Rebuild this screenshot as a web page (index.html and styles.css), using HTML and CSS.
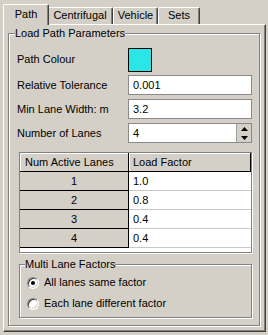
FILE: index.html
```html
<!DOCTYPE html>
<html lang="en">
<head>
    <meta charset="UTF-8">
    <meta name="viewport" content="width=device-width, initial-scale=1.0">
    <title>Path Settings</title>
    <link rel="stylesheet" href="styles.css">
</head>
<body>
    <div class="tabs">
        <div class="tab tab-path active">Path</div>
        <div class="tab tab-centrifugal">Centrifugal</div>
        <div class="tab tab-vehicle">Vehicle</div>
        <div class="tab tab-sets">Sets</div>
    </div>

    <div class="panel">
        <fieldset class="group main-group">
            <legend>Load Path Parameters</legend>

            <div class="form-grid">
                <label>Path Colour</label>
                <div class="swatch-cell"><div class="swatch"></div></div>

                <label>Relative Tolerance</label>
                <div class="field">0.001</div>

                <label>Min Lane Width: m</label>
                <div class="field">3.2</div>

                <label>Number of Lanes</label>
                <div class="field spin">
                    <span class="spin-value">4</span>
                    <div class="spin-btns">
                        <svg width="7" height="4" viewBox="0 0 7 4"><polygon points="3.5,0 7,4 0,4" fill="#000"/></svg>
                        <svg width="7" height="4" viewBox="0 0 7 4"><polygon points="0,0 7,0 3.5,4" fill="#000"/></svg>
                    </div>
                </div>
            </div>

            <div class="grid-box">
                <table class="lanes">
                    <tr>
                        <th class="col-num">Num Active Lanes</th>
                        <th class="col-factor">Load Factor</th>
                    </tr>
                    <tr><td class="row-head">1</td><td class="value">1.0</td></tr>
                    <tr><td class="row-head">2</td><td class="value">0.8</td></tr>
                    <tr><td class="row-head">3</td><td class="value">0.4</td></tr>
                    <tr><td class="row-head">4</td><td class="value">0.4</td></tr>
                </table>
            </div>

            <fieldset class="group sub-group">
                <legend>Multi Lane Factors</legend>
                <div class="radio-row"><span class="radio checked"></span>All lanes same factor</div>
                <div class="radio-row"><span class="radio"></span>Each lane different factor</div>
            </fieldset>
        </fieldset>
    </div>
</body>
</html>
```

FILE: styles.css
```css
body {
    margin: 0;
    background: #d4d0c8;
    font-family: "Liberation Sans", Arial, sans-serif;
    font-size: 11px;
    line-height: 13px;
    color: #000;
    width: 268px;
    height: 335px;
    overflow: hidden;
}

/* tab strip */
.tabs {
    display: flex;
    align-items: flex-end;
    height: 20px;
    margin-top: 4px;
    padding-left: 5px;
}
.tab {
    box-sizing: border-box;
    height: 17px;
    padding-top: 1px;
    text-align: center;
    border-top: 1px solid #fff;
    border-left: 1px solid #fff;
    border-right: 1px solid #404040;
    border-top-left-radius: 2px;
    border-top-right-radius: 2px;
    box-shadow: inset -1px 0 0 #808080;
    background: #d4d0c8;
}
.tab-path { width: 42px; }
.tab-centrifugal { width: 66px; }
.tab-vehicle { width: 45px; }
.tab-sets { width: 42px; }
.tab.active {
    position: relative;
    z-index: 1;
    height: 21px;
    width: 46px;
    margin: 0 -2px -1px -2px;
    padding-top: 3px;
}

/* panel */
.panel {
    box-sizing: border-box;
    width: 263px;
    height: 308px;
    margin-left: 3px;
    border-top: 1px solid #fff;
    border-left: 1px solid #fff;
    border-right: 1px solid #404040;
    border-bottom: 1px solid #404040;
    box-shadow: inset -1px -1px 0 #808080;
}

.group {
    margin: 0;
    min-inline-size: 0;
    border: 1px solid #808080;
    box-shadow: inset 1px 1px 0 #fff, 1px 1px 0 #fff;
}
.group legend {
    padding: 0;
    margin-left: -2px;
    background: #d4d0c8;
}
.main-group {
    box-sizing: border-box;
    width: 252px;
    margin: 2px 0 0 4px;
    padding: 8px 7px 7px 8px;
}

/* fields */
.form-grid {
    display: grid;
    grid-template-columns: 111px 1fr;
    grid-template-rows: 23px 20px 20px 20px;
    row-gap: 4px;
    align-items: center;
}
.swatch-cell {
    align-self: start;
}
.swatch {
    box-sizing: border-box;
    width: 24px;
    height: 24px;
    background: #2ae6e6;
    border: 1px solid #000;
}
.field {
    box-sizing: border-box;
    height: 20px;
    background: #fff;
    border: 1px solid #8a8a8a;
    padding-left: 4px;
    line-height: 18px;
}
.spin {
    display: flex;
    padding-right: 0;
}
.spin-value {
    flex: 1;
}
.spin-btns {
    width: 14px;
    display: flex;
    flex-direction: column;
    align-items: center;
    justify-content: center;
    gap: 5px;
    background: #d4d0c8;
    border-left: 1px solid #a0a0a0;
}

/* lanes grid */
.grid-box {
    box-sizing: border-box;
    width: 233px;
    height: 101px;
    margin: 9px 0 0 2px;
    background: #fff;
    border: 1px solid #808080;
    box-shadow: 1px 1px 0 #fff;
}
.lanes {
    width: 100%;
    border-spacing: 0;
}
.lanes th, .lanes td {
    padding: 0;
    line-height: 18px;
    font-weight: normal;
    text-align: left;
}
.lanes th {
    background: #d4d0c8;
    border-right: 1px solid #000;
    border-bottom: 1px solid #000;
    box-shadow: inset 1px 1px 0 #fff;
}
.col-num {
    width: 103px;
    padding-left: 5px !important;
}
.col-factor {
    padding-left: 4px !important;
}
.row-head {
    background: #d4d0c8;
    text-align: center !important;
    border-right: 1px solid #000;
    border-bottom: 1px solid #000;
}
.value {
    padding-left: 4px !important;
    border-bottom: 1px solid #c8c8c8;
}

/* multi lane factors */
.sub-group {
    box-sizing: border-box;
    width: 233px;
    margin: 5px 0 0 2px;
    padding: 1px 7px 3px 7px;
}
.radio-row {
    display: flex;
    align-items: center;
    height: 21px;
    gap: 5px;
}
.radio {
    box-sizing: border-box;
    width: 12px;
    height: 12px;
    border-radius: 50%;
    background: #fff;
    border: 1px solid;
    border-color: #808080 #fff #fff #808080;
    box-shadow: inset 1px 1px 0 #404040, inset -1px -1px 0 #d4d0c8;
    display: flex;
    align-items: center;
    justify-content: center;
}
.radio.checked::after {
    content: "";
    width: 4px;
    height: 4px;
    border-radius: 50%;
    background: #000;
}
```
